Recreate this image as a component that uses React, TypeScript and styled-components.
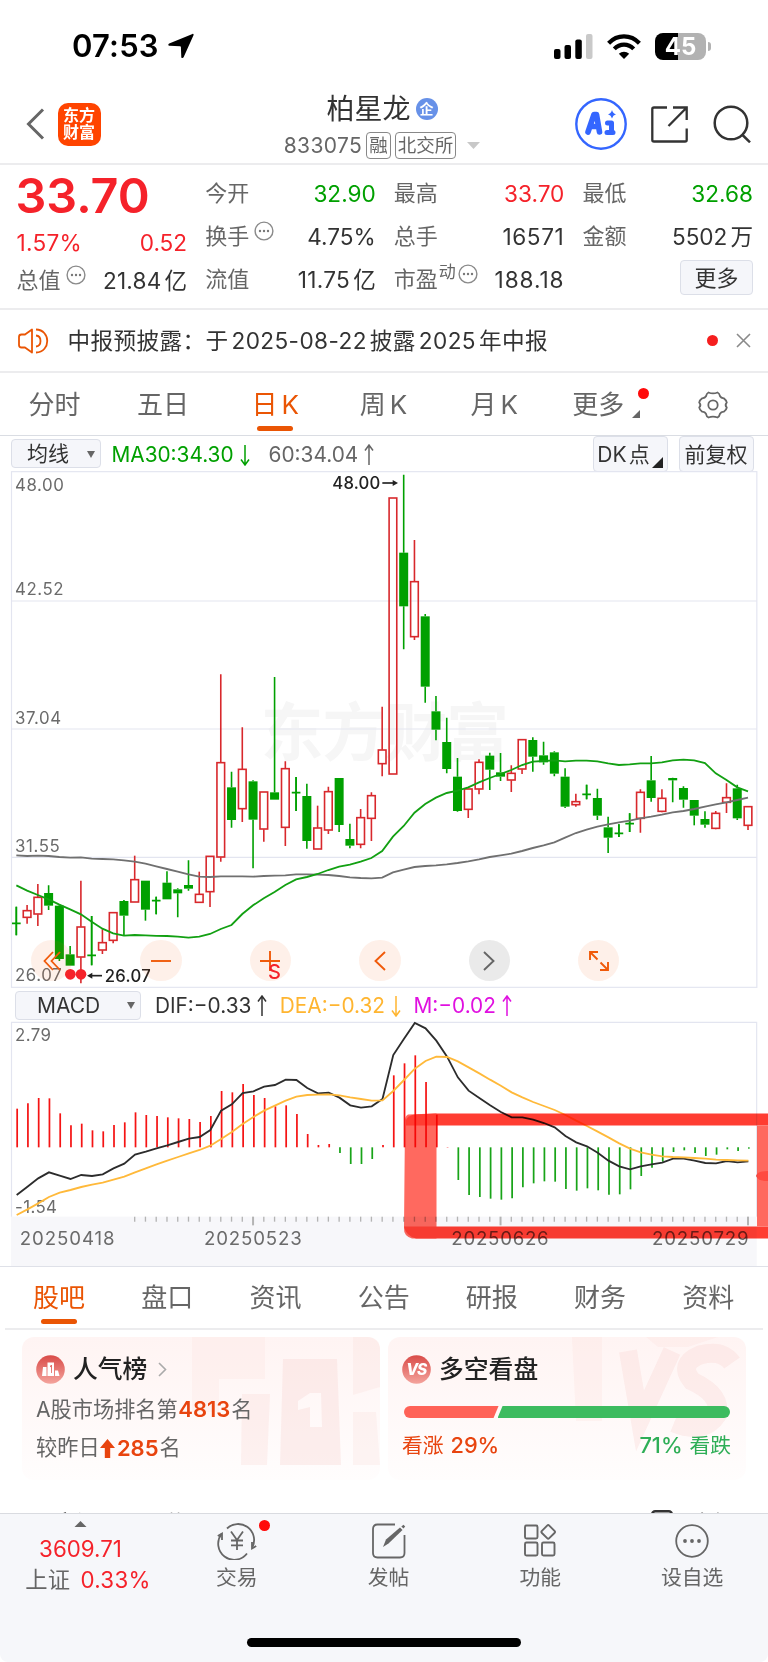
import React from "react";
import styled, { createGlobalStyle } from "styled-components";

const Global = createGlobalStyle`
  * { box-sizing: border-box; }
  body { margin: 0; background: #fff; }
  #root { font-family: Inter, "Noto Sans CJK SC", sans-serif; color: #333; line-height: 1.3; }
`;

const RED = "#f5222a";
const GREEN = "#00a000";
const ORANGE = "#ea5504";
const GREY = "#666";

const Page = styled.main`
  width: 768px;
  height: 1662px;
  display: flex;
  flex-direction: column;
  background: #fff;
  overflow: hidden;
`;

/* ---------- status bar ---------- */
const StatusBar = styled.div`
  height: 88px;
  flex: none;
  padding: 4px 56px 0 72px;
  display: flex;
  align-items: center;
  justify-content: space-between;
`;
const Clock = styled.div`
  display: flex;
  align-items: center;
  gap: 9px;
  font-size: 31px;
  font-weight: 600;
  letter-spacing: 0.2px;
  color: #000;
`;
const StatusIcons = styled.div`
  display: flex;
  align-items: center;
  gap: 14px;
`;
const Battery = styled.div`
  position: relative;
  width: 51px;
  height: 27px;
  border-radius: 8px;
  background: linear-gradient(90deg, #000 46%, #b2b2b2 46%);
  color: #fff;
  font-size: 24px;
  font-weight: 700;
  line-height: 27px;
  text-align: center;
  margin-right: 6px;
  &::after {
    content: "";
    position: absolute;
    right: -5px;
    top: 9px;
    width: 3px;
    height: 9px;
    border-radius: 0 4px 4px 0;
    background: #b2b2b2;
  }
`;

/* ---------- title bar ---------- */
const TitleBar = styled.header`
  height: 77px;
  flex: none;
  display: flex;
  align-items: center;
  padding: 0 17px 0 26px;
  border-bottom: 2px solid #ececee;
`;
const Side = styled.div<{ $end?: boolean }>`
  width: ${(p) => (p.$end ? 220 : 207)}px;
  height: 100%;
  display: flex;
  align-items: center;
  padding-bottom: 3px;
  justify-content: ${(p) => (p.$end ? "flex-end" : "flex-start")};
`;
const Logo = styled.div`
  width: 43px;
  height: 43px;
  margin-left: 12.5px;
  border-radius: 10px;
  background: #ff4400;
  color: #fff;
  font-size: 16px;
  font-weight: 700;
  line-height: 17.5px;
  padding-top: 4px;
  text-align: center;
`;
const TitleBlock = styled.div`
  flex: 1;
  height: 100%;
  display: flex;
  flex-direction: column;
  align-items: center;
`;
const TitleLine = styled.div`
  height: 42px;
  padding-top: 1px;
  display: flex;
  align-items: center;
  gap: 5px;
  font-size: 28px;
  color: #333;
`;
const CompanyBadge = styled.span`
  width: 22px;
  height: 22px;
  border-radius: 50%;
  background: #6791e8;
  color: #fff;
  font-size: 14px;
  font-weight: 700;
  line-height: 21px;
  text-align: center;
`;
const CodeLine = styled.div`
  height: 35px;
  display: flex;
  align-items: center;
  font-size: 21px;
  letter-spacing: 0.4px;
  color: ${GREY};
`;
const MarketTag = styled.span`
  height: 27px;
  padding: 0 2px;
  margin-left: 4px;
  border: 1.5px solid #888;
  border-radius: 4px;
  font-size: 18.5px;
  letter-spacing: 0;
  line-height: 25px;
`;

/* ---------- quote ---------- */
const Quote = styled.section`
  height: 145px;
  flex: none;
  padding: 7px 15px 0 16.5px;
  display: grid;
  grid-template-columns: repeat(4, 1fr);
  column-gap: 18px;
  border-bottom: 2px solid #ececee;
`;
const QuoteColumn = styled.div`
  display: flex;
  flex-direction: column;
`;
const QuoteCell = styled.div<{ $tone?: string; $height?: number }>`
  height: ${(p) => p.$height ?? 43}px;
  display: flex;
  align-items: center;
  justify-content: space-between;
  font-size: 22.6px;
  white-space: nowrap;
  color: ${(p) => p.$tone ?? "#333"};
`;
const Label = styled.span`
  display: flex;
  align-items: center;
  gap: 5px;
  font-size: 22px;
  color: ${GREY};
`;
const Value = styled.span<{ $spread?: number }>`
  letter-spacing: ${(p) => p.$spread ?? 0}px;
`;
const Unit = styled.span<{ $left?: number }>`
  margin-left: ${(p) => p.$left ?? 3}px;
  letter-spacing: 0;
`;
const Price = styled.div`
  height: 50px;
  margin: 0 0 3px -1px;
  font-size: 48.5px;
  line-height: 48px;
  font-weight: 600;
  letter-spacing: 0;
  color: ${RED};
`;
const Sup = styled.sup`
  font-size: 17px;
  line-height: 1;
  margin: -15px -3px 0 -4px;
`;
const MoreButton = styled.button`
  width: 73px;
  height: 35px;
  margin: 2px 0 0 auto;
  border: 1px solid #dcdfe8;
  border-radius: 4px;
  background: #f5f6fa;
  font: inherit;
  font-size: 22px;
  line-height: 32px;
  color: #333;
  padding: 0;
`;

/* ---------- notice ---------- */
const Notice = styled.div`
  height: 63px;
  flex: none;
  display: flex;
  align-items: center;
  padding: 0 17.5px;
  border-bottom: 2px solid #ececee;
  font-size: 22.6px;
`;
const NoticeText = styled.span`
  margin-left: 19px;
  flex: 1;
  white-space: pre;
  letter-spacing: 0.4px;
`;
const Num = styled.span`
  margin: 0 3px;
`;
const Dot = styled.span<{ $size: number }>`
  width: ${(p) => p.$size}px;
  height: ${(p) => p.$size}px;
  border-radius: 50%;
  background: #f51e1e;
`;
const CloseIcon = styled.svg`
  margin-left: 18px;
`;

/* ---------- tabs ---------- */
const PeriodTabs = styled.nav`
  height: 63px;
  flex: none;
  display: flex;
  border-bottom: 1px solid #dadde3;
`;
const Tab = styled.div<{ $active?: boolean; $width: number }>`
  position: relative;
  width: ${(p) => p.$width}px;
  height: 100%;
  display: flex;
  align-items: center;
  justify-content: center;
  gap: 8px;
  padding-top: 1.5px;
  font-size: 26px;
  white-space: nowrap;
  color: ${(p) => (p.$active ? ORANGE : GREY)};
  &::after {
    content: "";
    display: ${(p) => (p.$active ? "block" : "none")};
    position: absolute;
    left: 50%;
    margin-left: -18px;
    bottom: 4px;
    width: 36px;
    height: 5.5px;
    border-radius: 3px;
    background: ${ORANGE};
  }
`;
const Latin = styled.span`
  margin-left: -4px;
`;
const TabBadge = styled.span`
  position: absolute;
  right: 8px;
  top: 15px;
  width: 11px;
  height: 11px;
  border-radius: 50%;
  background: #ff0a0a;
`;
const Corner = styled.span<{ $size: number; $color: string }>`
  width: 0;
  height: 0;
  align-self: flex-end;
  margin: 0 0 3px 2px;
  border-left: ${(p) => p.$size}px solid transparent;
  border-bottom: ${(p) => p.$size}px solid ${(p) => p.$color};
`;

/* ---------- chart ---------- */
const Toolbar = styled.div<{ $height: number; $left: number }>`
  height: ${(p) => p.$height}px;
  flex: none;
  display: flex;
  align-items: center;
  padding: 0 14.5px 0 ${(p) => p.$left}px;
  font-size: 20.8px;
  white-space: nowrap;
`;
const Select = styled.div<{ $width: number; $pad: number }>`
  width: ${(p) => p.$width}px;
  height: 29px;
  border: 1px solid #dcdfe8;
  border-radius: 4px;
  background: #f5f6fa;
  display: flex;
  align-items: center;
  justify-content: space-between;
  padding: 1px 5px 0 ${(p) => p.$pad}px;
  font-size: 21px;
`;
const Reading = styled.span<{ $tone: string; $left: number }>`
  display: flex;
  align-items: center;
  gap: 6px;
  padding-top: 2px;
  margin-left: ${(p) => p.$left}px;
  color: ${(p) => p.$tone};
`;
const ToolButton = styled.div<{ $first?: boolean }>`
  width: 75px;
  height: 36px;
  margin-left: ${(p) => (p.$first ? "auto" : "11px")};
  border: 1px solid #dcdfe8;
  border-radius: 4px;
  background: #f5f6fa;
  display: flex;
  align-items: center;
  justify-content: center;
  padding-top: 2px;
  font-size: 21px;
`;
const ChartArea = styled.section`
  position: relative;
  flex: none;
  height: 796px;
  border-bottom: 1px solid #dfe1e8;
`;
const Drawing = styled.svg`
  display: block;
`;
const Controls = styled.div`
  position: absolute;
  left: 31px;
  top: 469px;
  display: flex;
  gap: 68px;
`;
const RoundButton = styled.div<{ $muted?: boolean }>`
  width: 41.4px;
  height: 41.4px;
  border-radius: 50%;
  display: flex;
  align-items: center;
  justify-content: center;
  color: ${(p) => (p.$muted ? "#666" : "#f05a0a")};
  background: ${(p) => (p.$muted ? "rgba(90,90,90,.13)" : "rgba(240,90,10,.09)")};
`;
const SellMark = styled.span`
  position: absolute;
  left: 268px;
  top: 489px;
  font-size: 20px;
  line-height: 24px;
  font-weight: 500;
  color: ${RED};
`;
const Marker = styled.svg`
  position: absolute;
  left: 400px;
  top: 638px;
  mix-blend-mode: multiply;
`;

/* ---------- community ---------- */
const SectionTabs = styled.nav`
  height: 63px;
  flex: none;
  margin: 0 5px;
  display: flex;
  border-bottom: 2px solid #ececee;
`;
const Cards = styled.section`
  flex: none;
  height: 151px;
  padding: 7px 22px 0;
  display: flex;
  gap: 8px;
`;
const Card = styled.article`
  position: relative;
  flex: 1;
  height: 143px;
  overflow: hidden;
  border-radius: 12px;
  background: linear-gradient(180deg, #fff4f3, #fffdfd);
  padding: 16px 15px 0 14px;
`;
const CardArt = styled.svg`
  position: absolute;
  left: 0;
  top: 0;
`;
const CardTitle = styled.h3`
  position: relative;
  margin: 0;
  height: 32px;
  display: flex;
  align-items: center;
  gap: 8px;
  font-size: 24.8px;
  font-weight: 500;
  color: #222;
`;
const Chevron = styled.svg`
  margin-left: 3px;
`;
const CardLine = styled.p<{ $top: number }>`
  position: relative;
  margin: ${(p) => p.$top}px 0 0;
  height: 30px;
  display: flex;
  align-items: center;
  font-size: 21.2px;
  color: ${GREY};
  b {
    color: #e8440f;
    font-size: 22px;
    font-weight: 600;
    margin: 0 1px 0 0.5px;
  }
`;
const Split = styled.div`
  position: relative;
  height: 12px;
  margin: 21px 1px 0 2px;
  display: flex;
  border-radius: 6px;
  overflow: hidden;
`;
const Up = styled.div`
  width: 29%;
  background: #ff6257;
  clip-path: polygon(0 0, 100% 0, calc(100% - 5px) 100%, 0 100%);
`;
const Down = styled.div`
  flex: 1;
  margin-left: -1px;
  background: #3dbb5f;
  clip-path: polygon(5px 0, 100% 0, 100% 100%, 0 100%);
`;
const Votes = styled.div`
  position: relative;
  display: flex;
  justify-content: space-between;
  margin-top: 12px;
  font-size: 20.8px;
  line-height: 30px;
`;
const Vote = styled.span<{ $tone: string }>`
  color: ${(p) => p.$tone};
  b {
    font-weight: 500;
    font-size: 21.8px;
    margin: 0 1px;
  }
`;
const FeedHead = styled.div`
  flex: none;
  height: 31.5px;
  padding: 26px 36px 0 33.5px;
  overflow: hidden;
  display: flex;
  align-items: flex-start;
`;
const FeedTab = styled.span<{ $strong?: boolean; $left?: number }>`
  font-weight: ${(p) => (p.$strong ? 500 : 400)};
  color: ${(p) => (p.$strong ? "#222" : "#888")};
  margin-top: ${(p) => (p.$strong ? 0 : -2)}px;
  margin-left: ${(p) => p.$left ?? 0}px;
  font-size: ${(p) => (p.$strong ? 25 : 20)}px;
  line-height: 36px;
`;
const LayoutIcon = styled.svg`
  margin: 3px 0 0 auto;
`;

/* ---------- bottom bar ---------- */
const BottomBar = styled.footer`
  flex: 1;
  position: relative;
  background: #f6f7fa;
  border-top: 1.5px solid #d9dbe0;
  border-radius: 0 0 8px 8px;
  display: flex;
  align-items: flex-start;
`;
const IndexQuote = styled.div`
  width: 161px;
  padding: 7px 0 0;
  display: flex;
  flex-direction: column;
  align-items: center;
  font-size: 22.3px;
  line-height: 31px;
  color: ${RED};
`;
const IndexPrice = styled.div`
  margin-top: 5.5px;
`;
const IndexChange = styled.div`
  display: flex;
  gap: 10px;
  margin-left: 15px;
  letter-spacing: 0.3px;
  span { color: ${GREY}; }
`;
const Action = styled.div`
  position: relative;
  width: 151.8px;
  padding-top: 8px;
  display: flex;
  flex-direction: column;
  align-items: center;
  font-size: 20.8px;
  line-height: 36px;
  color: ${GREY};
`;
const ActionBadge = styled.span`
  position: absolute;
  left: 98px;
  top: 6px;
  width: 11px;
  height: 11px;
  border-radius: 50%;
  background: #ff0a0a;
`;
const HomeIndicator = styled.div`
  position: absolute;
  left: 247px;
  top: 124px;
  width: 274px;
  height: 9px;
  border-radius: 5px;
  background: #000;
`;

/* ---------- data: plot units are thirds of a pixel ---------- */
type Candle = [up: 0 | 1, high: number, top: number, bottom: number, low: number];
const CANDLES: Candle[] = [
  [0, 530, 579, 581, 616], [1, 525, 541, 563, 581], [1, 462, 501, 553, 588], [0, 466, 489, 527, 540],
  [0, 522, 527, 687, 693], [0, 648, 673, 707, 707], [1, 452, 590, 682, 760], [0, 558, 675, 677, 706],
  [1, 598, 637, 661, 672], [1, 547, 547, 632, 640], [0, 510, 513, 557, 615], [1, 377, 448, 517, 517],
  [0, 452, 452, 539, 572], [0, 500, 511, 513, 553], [0, 424, 458, 508, 508], [0, 475, 478, 490, 562],
  [0, 391, 465, 476, 482], [1, 425, 492, 518, 518], [1, 378, 378, 486, 531], [1, -167, 97, 382, 395],
  [0, 125, 172, 270, 293], [1, -8, 117, 237, 276], [0, 151, 154, 269, 415], [1, 185, 185, 298, 335],
  [0, -159, 187, 209, 209], [1, 94, 115, 293, 348], [0, 141, 187, 189, 243], [0, 161, 198, 333, 356],
  [1, 227, 293, 358, 358], [1, 170, 184, 301, 312], [0, 144, 144, 285, 306], [0, 281, 327, 347, 355],
  [1, 237, 262, 344, 355], [1, 187, 196, 266, 333], [1, -70, 59, 102, 139], [1, -697, -697, 133, 133],
  [0, -766, -532, -371, -242], [1, -570, -446, -279, -270], [0, -348, -341, -130, -82], [0, -102, -56, -1, 31],
  [0, -37, 36, 117, 130], [0, 84, 140, 243, 245], [1, 176, 176, 239, 264], [1, 88, 96, 178, 193],
  [0, 68, 77, 119, 180], [0, 69, 127, 140, 153], [1, 106, 129, 151, 186], [1, 28, 28, 118, 132],
  [0, 22, 30, 80, 125], [0, 35, 76, 97, 104], [0, 64, 67, 131, 139], [0, 115, 140, 230, 234],
  [1, 191, 214, 225, 230], [0, 164, 192, 194, 208], [0, 176, 204, 257, 270], [0, 260, 292, 323, 369],
  [0, 283, 309, 312, 321], [0, 250, 280, 283, 306], [1, 178, 186, 266, 308], [0, 78, 151, 204, 215],
  [1, 178, 204, 245, 247], [0, 143, 144, 151, 217], [0, 169, 174, 209, 233], [0, 210, 210, 257, 286],
  [0, 244, 267, 284, 293], [1, 243, 249, 296, 298], [1, 160, 202, 218, 249], [0, 164, 175, 265, 270],
  [1, 229, 229, 287, 300],
];
const MA30 = [
  466, 482, 495, 508, 524, 538, 553, 575, 596, 610, 617, 615, 616, 617.5, 618, 620, 623, 620, 612, 597, 585, 552, 526,
  505, 486, 465, 448, 441, 432, 420, 410, 404, 395, 384, 363, 320, 288, 248, 222, 203, 189, 182, 172, 157, 144, 132,
  120, 105, 95, 93, 91, 94, 92, 92, 94, 100, 105, 103, 100, 100, 97, 91, 89, 91, 99, 130, 150, 172, 184,
];
const MA60 = [
  376, 378, 377, 378, 381, 383, 382, 386, 387, 388, 391, 395, 401, 409, 417, 425, 433, 440, 441, 439, 439, 439, 440,
  438, 437, 436, 433, 433, 434, 435, 438, 442, 444, 445, 443, 427, 419, 411, 408, 406, 403, 399, 394, 388, 381, 376,
  371, 363, 354, 346, 337, 323, 309, 299, 290, 283, 277, 272, 265, 260, 254, 247, 243, 237, 230, 223, 217, 210, 203,
];
const MACD_BARS = [
  386, 370, 354, 355, 400, 436, 431, 451, 454, 435, 427, 397, 405, 408, 412, 415, 417, 426, 408, 333, 337, 312, 345,
  354, 379, 376, 402, 462, 495, 492, 519, 552, 552, 537, 495, 286, 250, 226, 306, 404, 501, 600, 645, 651, 656, 659,
  655, 622, 610, 604, 605, 627, 632, 625, 631, 644, 643, 628, 588, 563, 545, 516, 511, 519, 528, 524, 508, 513, 506,
];
const DIF = [
  645, 620, 595, 577, 587, 597, 585, 588, 583, 565, 551, 524, 515, 505, 496, 486, 476, 471, 450, 392, 373, 339, 334,
  320, 315, 299, 300, 324, 340, 338, 353, 376, 383, 379, 357, 225, 176, 129, 145, 182, 230, 292, 332, 354, 376, 396,
  412, 412, 419, 429, 442, 468, 487, 499, 518, 542, 559, 568, 559, 553, 548, 536, 536, 542, 549, 550, 543, 547, 544,
];
const DEA = [
  705, 688, 670, 651, 638, 630, 621, 614, 608, 599, 590, 577, 565, 553, 542, 531, 520, 510, 497, 477, 456, 432, 411,
  392, 377, 362, 350, 345, 344, 343, 346, 352, 357, 362, 361, 333, 300, 266, 243, 230, 231, 244, 262, 280, 299, 317,
  337, 352, 366, 378, 390, 405, 422, 438, 455, 472, 490, 506, 517, 524, 529, 531, 532, 534, 536, 539, 540, 541, 542,
];
const STEP = 32.28;
const at = (i: number) => 49 + STEP * i;
const line = (values: number[], shift = 0) =>
  values.map((v, i) => `${(at(i) + shift).toFixed(1)},${v}`).join(" ");

function PriceChart() {
  return (
    <Drawing width="768" height="518" viewBox="0 -777 2304 1554">
      <text x="782" y="74" fontSize="188" fontWeight="700" fill="#f6f6f6" textLength="745">东方财富</text>
      <g stroke="#e3e5f0" strokeWidth="3.5" fill="none">
        <rect x="34.5" y="-775" width="2236" height="1547" />
        <path d="M34-387H2270M34-3H2270M34 382H2270" />
      </g>
      {CANDLES.map(([up, high, top, bottom, low], i) => {
        const x = at(i);
        const color = up ? "#d8282c" : GREEN;
        const thin = bottom - top < 4;
        return (
          <g key={i} stroke={color} strokeWidth="4.8">
            <path d={`M${x} ${high}V${top}M${x} ${bottom}V${low}`} />
            {thin ? (
              <path d={`M${x - 13} ${top + 1}h26M${x} ${high}V${low}`} />
            ) : up ? (
              <rect x={x - 11.5} y={top + 1} width="23" height={bottom - top - 2} fill="none" />
            ) : (
              <rect x={x - 13.5} y={top} width="27" height={bottom - top} fill={color} stroke="none" />
            )}
          </g>
        );
      })}
      <polyline points={line(MA60)} fill="none" stroke="#707070" strokeWidth="5.5" />
      <polyline points={line(MA30)} fill="none" stroke="#12a012" strokeWidth="5.5" />
      <g fontSize="50.5" fill="#6b6b6b" letterSpacing="1.8">
        <text x="45" y="-716">48.00</text>
        <text x="45" y="-406">42.52</text>
        <text x="45" y="-19">37.04</text>
        <text x="45" y="366">31.55</text>
        <text x="45" y="752">26.07</text>
      </g>
      <g fontSize="50" fontWeight="500" fill="#222">
        <text x="997" y="-722" textLength="144">48.00</text>
        <text x="314" y="755" textLength="138">26.07</text>
      </g>
      <g stroke="#222" strokeWidth="5" fill="#222">
        <path d="M1147-741H1182" />
        <path d="M1178-750L1194-741L1178-732Z" stroke="none" />
        <path d="M272 737H306" />
        <path d="M277 728L261 737L277 746Z" stroke="none" />
      </g>
      <circle cx="211" cy="733" r="16" fill={RED} />
      <circle cx="243" cy="733" r="16" fill={RED} />
    </Drawing>
  );
}

function MacdChart() {
  return (
    <Drawing width="768" height="245" viewBox="0 123 2304 735">
      <rect x="33" y="710" width="2237" height="148" fill="#f7f7fa" />
      <path d="M34.5 710V127H2270V710" fill="none" stroke="#e3e5f0" strokeWidth="3.5" />
      {MACD_BARS.map((v, i) => (
        <path key={i} d={`M${at(i) + 2.5} 502V${v}`} stroke={v < 502 ? "#f51414" : "#18a418"} strokeWidth="5.2" />
      ))}
      <g fontSize="50.5" fill="#6b6b6b" letterSpacing="1.2">
        <text x="45" y="182">2.79</text>
        <text x="45" y="699">-1.54</text>
      </g>
      <polyline points={line(DIF, 1)} fill="none" stroke="#2c2c2c" strokeWidth="5.5" />
      <polyline points={line(DEA, 1)} fill="none" stroke="#ffb93a" strokeWidth="5.5" />
      {DIF.map((_, i) => {
        if (i < 11) return null;
        const major = i === 22 || i === 45 || i === 68;
        return (
          <path key={i} d={`M${at(i)} 710v${major ? 26 : 15}`} stroke="#b4b4b4" strokeWidth={major ? 6 : 4} />
        );
      })}
      <g fontSize="56" fill="#6b6b6b">
        <text x="59" y="795" textLength="285">20250418</text>
        <text x="612" y="795" textLength="293">20250523</text>
        <text x="1354" y="795" textLength="292">20250626</text>
        <text x="1956" y="795" textLength="290">20250729</text>
      </g>
    </Drawing>
  );
}

const RaisedIcon = styled.span`
  display: flex;
  margin-top: -11px;
`;
const Info = () => (
  <RaisedIcon>
    <svg width="20" height="20" viewBox="0 0 20 20">
      <circle cx="10" cy="10" r="8.9" fill="none" stroke="#8a8a8a" strokeWidth="1.4" />
      <g fill="#777">
        <circle cx="6" cy="10" r="1.2" /><circle cx="10" cy="10" r="1.2" /><circle cx="14" cy="10" r="1.2" />
      </g>
    </svg>
  </RaisedIcon>
);

const Arrow = ({ down }: { down?: boolean }) => (
  <svg width="10" height="22" viewBox="0 0 10 22" fill="none" stroke="currentColor" strokeWidth="1.5">
    <path d={down ? "M5 1V21M1 15.5L5 21L9 15.5" : "M5 21V1M1 6.5L5 1L9 6.5"} />
  </svg>
);
const Caret = ({ up, width = 8, height = 7 }: { up?: boolean; width?: number; height?: number }) => (
  <svg width={width} height={height} viewBox="0 0 10 8" preserveAspectRatio="none">
    <path d={up ? "M0 8L5 0L10 8Z" : "M0 0H10L5 8Z"} fill="#666" />
  </svg>
);
const CodeCaret = styled.svg`
  margin-left: 11px;
`;
const ShareIcon = styled.svg`
  margin-left: 24px;
`;
const SearchIcon = styled.svg`
  margin-left: 25px;
`;

const PERIODS: [string, number][] = [["分时", 109.2], ["五日", 108], ["日K", 117], ["周K", 99.6], ["月K", 122.2]];
const SECTIONS = ["股吧", "盘口", "资讯", "公告", "研报", "财务", "资料"];

export default function App() {
  return (
    <Page>
      <Global />
      <StatusBar>
        <Clock>
          07:53
          <svg width="26" height="26" viewBox="0 0 26 25">
            <path d="M24.5 .4C25.3 .1 25.9 .8 25.5 1.7L15.6 23.8C15 25 13.4 24.8 13.3 23.4L12.9 13.5Q12.8 12.7 12 12.7L1.6 12.2C.1 12.1-.1 10.6 1.2 10Z" />
          </svg>
        </Clock>
        <StatusIcons>
          <svg width="39" height="25" viewBox="0 0 39 25">
            <rect x="0" y="15" width="6.5" height="10" rx="2" />
            <rect x="10.5" y="11" width="6.5" height="14" rx="2" />
            <rect x="21.3" y="5.5" width="6.5" height="19.5" rx="2" />
            <rect x="32" y="0" width="6.5" height="25" rx="2" fill="#c9c9c9" />
          </svg>
          <svg width="34" height="25" viewBox="0 0 34 25" fill="none" stroke="#000" strokeWidth="4.2">
            <path d="M1.6 9.2C10.3 .1 23.7 .1 32.4 9.2" />
            <path d="M7.3 14.9C12.8 9.3 21.2 9.3 26.7 14.9" />
            <path d="M17 25L11.8 19.7C14.8 17 19.2 17 22.2 19.7Z" fill="#000" stroke="none" />
          </svg>
          <Battery>45</Battery>
        </StatusIcons>
      </StatusBar>

      <TitleBar>
        <Side>
          <svg width="19" height="32" viewBox="0 0 19 32" fill="none" stroke="#666" strokeWidth="3">
            <path d="M17 1.5L2.5 16L17 30.5" />
          </svg>
          <Logo>东方<br />财富</Logo>
        </Side>
        <TitleBlock>
          <TitleLine>柏星龙<CompanyBadge>企</CompanyBadge></TitleLine>
          <CodeLine>
            833075
            <MarketTag>融</MarketTag>
            <MarketTag>北交所</MarketTag>
            <CodeCaret width="13" height="7" viewBox="0 0 13 7"><path d="M0 0H13L6.5 7Z" fill="#c8c8c8" /></CodeCaret>
          </CodeLine>
        </TitleBlock>
        <Side $end>
          <svg width="52" height="52" viewBox="0 0 52 52">
            <circle cx="26" cy="26" r="24.7" fill="none" stroke="#3466ff" strokeWidth="2.4" />
            <g fill="none" stroke="#3466ff" strokeWidth="5.6" strokeLinecap="round" strokeLinejoin="round">
              <path d="M13 34L19 16.500H21.500L24.500 34M17.500 28.500H23" />
              <path d="M32.500 25H36.500V34.500M32 34.500H38" strokeWidth="5" />
            </g>
            <path d="M37 12Q37.8 15.5 41 16.3Q37.8 17.2 37 20.6Q36.2 17.2 33 16.3Q36.2 15.5 37 12Z" fill="#3466ff" />
          </svg>
          <ShareIcon width="37" height="37" viewBox="0 0 37 37" fill="none" stroke="#333" strokeWidth="2.3">
            <path d="M16 1.5H3Q1.300 1.500 1.300 3V34Q1.300 35.500 3 35.500H34Q35.700 35.500 35.700 34V22.5M22 1.5H35.7V14M35.5 1.7L17.5 20" />
          </ShareIcon>
          <SearchIcon width="38" height="38" viewBox="0 0 38 38" fill="none" stroke="#333" strokeWidth="2.5">
            <circle cx="18" cy="18" r="16.3" />
            <path d="M29 29.5L37 37.3" />
          </SearchIcon>
        </Side>
      </TitleBar>

      <Quote>
        <QuoteColumn>
          <Price>33.70</Price>
          <QuoteCell $tone={RED} $height={35}><Value $spread={0.3}>1.57%</Value><Value>0.52</Value></QuoteCell>
          <QuoteCell $height={41}><Label>总值<Info /></Label><Value $spread={0.2}>21.84<Unit>亿</Unit></Value></QuoteCell>
        </QuoteColumn>
        <QuoteColumn>
          <QuoteCell $tone={GREEN}><Label>今开</Label><Value>32.90</Value></QuoteCell>
          <QuoteCell><Label>换手<Info /></Label><Value>4.75%</Value></QuoteCell>
          <QuoteCell><Label>流值</Label><Value $spread={0.3}>11.75<Unit>亿</Unit></Value></QuoteCell>
        </QuoteColumn>
        <QuoteColumn>
          <QuoteCell $tone={RED}><Label>最高</Label><Value>33.70</Value></QuoteCell>
          <QuoteCell><Label>总手</Label><Value $spread={0.6}>16571</Value></QuoteCell>
          <QuoteCell><Label>市盈<Sup>动</Sup><Info /></Label><Value $spread={0.9}>188.18</Value></QuoteCell>
        </QuoteColumn>
        <QuoteColumn>
          <QuoteCell $tone={GREEN}><Label>最低</Label><Value>32.68</Value></QuoteCell>
          <QuoteCell><Label>金额</Label><Value>5502<Unit>万</Unit></Value></QuoteCell>
          <MoreButton>更多</MoreButton>
        </QuoteColumn>
      </Quote>

      <Notice>
        <svg width="31" height="26" viewBox="0 0 31 26" fill="none" stroke={ORANGE} strokeWidth="1.8">
          <path d="M14 1.5V24.5L7 19.5H3.5Q1 19.5 1 17V9Q1 6.5 3.5 6.5H7Z" strokeLinejoin="round" />
          <path d="M18 7.5C24 8 24 18 18 18.5M18 1.5C33 2 33 24 18 24.5" />
        </svg>
        <NoticeText>中报预披露：于<Num>2025-08-22</Num>披露<Num>2025</Num>年中报</NoticeText>
        <Dot $size={11} />
        <CloseIcon width="15" height="15" viewBox="0 0 15 15" stroke="#8a8a8a" strokeWidth="1.6">
          <path d="M1 1L14 14M14 1L1 14" />
        </CloseIcon>
      </Notice>

      <PeriodTabs>
        {PERIODS.map(([name, width], i) => (
          <Tab key={name} $width={width} $active={i === 2}>
            {name.endsWith("K") ? <><span>{name[0]}</span><Latin>K</Latin></> : name}
          </Tab>
        ))}
        <Tab $width={102}>
          更多
          <svg width="8" height="26" viewBox="0 0 8 26"><path d="M8 18V26H0Z" fill="#666" /></svg>
          <TabBadge />
        </Tab>
        <Tab $width={111}>
          <svg width="30" height="28" viewBox="0 0 30 28" fill="none" stroke="#666" strokeWidth="1.8" strokeLinejoin="round">
            <path d="M10.5 1.5Q15 3.4 19.5 1.5Q21.5 2.4 22 5.2Q23 7 25.8 7.3Q28.6 9.6 28.8 11.5Q26.4 14 28.8 16.5Q28.4 19 25.8 20.7Q23 21 22 22.8Q21.4 25.6 19.5 26.5Q15 24.6 10.5 26.5Q8.5 25.6 8 22.8Q7 21 4.2 20.7Q1.5 18.8 1.2 16.5Q3.6 14 1.2 11.5Q1.5 9.2 4.2 7.3Q7 7 8 5.2Q8.6 2.4 10.5 1.5Z" />
            <circle cx="15" cy="14" r="4.7" />
          </svg>
        </Tab>
      </PeriodTabs>

      <Toolbar $height={35} $left={11}>
        <Select $width={90} $pad={15}>均线<Caret /></Select>
        <Reading $tone={GREEN} $left={10.5}>MA30:34.30<Arrow down /></Reading>
        <Reading $tone={GREY} $left={19}>60:34.04<Arrow /></Reading>
        <ToolButton $first>DK<Unit $left={2}>点</Unit><Corner $size={11} $color="#222" /></ToolButton>
        <ToolButton>前复权</ToolButton>
      </Toolbar>
      <ChartArea>
        <PriceChart />
        <Toolbar $height={32} $left={15}>
          <Select $width={126} $pad={21}>MACD<Caret /></Select>
          <Reading $tone="#333" $left={14}>DIF:−0.33<Arrow /></Reading>
          <Reading $tone="#ffb530" $left={12.5}>DEA:−0.32<Arrow down /></Reading>
          <Reading $tone="#e010e0" $left={12.5}>M:−0.02<Arrow /></Reading>
        </Toolbar>
        <MacdChart />
        <Controls>
          <RoundButton>
            <svg width="18" height="20" viewBox="0 0 18 20" fill="none" stroke="currentColor" strokeWidth="1.8"><path d="M10 1L1.5 10L10 19M17 1L8.5 10L17 19" /></svg>
          </RoundButton>
          <RoundButton>
            <svg width="20" height="20" viewBox="0 0 20 20" stroke="currentColor" strokeWidth="1.9"><path d="M0 10H20" /></svg>
          </RoundButton>
          <RoundButton>
            <svg width="20" height="20" viewBox="0 0 20 20" stroke="currentColor" strokeWidth="1.9"><path d="M0 10H20M10 0V20" /></svg>
          </RoundButton>
          <RoundButton>
            <svg width="12" height="20" viewBox="0 0 12 20" fill="none" stroke="currentColor" strokeWidth="1.9"><path d="M11 1L1.5 10L11 19" /></svg>
          </RoundButton>
          <RoundButton $muted>
            <svg width="12" height="20" viewBox="0 0 12 20" fill="none" stroke="currentColor" strokeWidth="1.9"><path d="M1 1L10.5 10L1 19" /></svg>
          </RoundButton>
          <RoundButton>
            <svg width="20" height="20" viewBox="0 0 20 20" fill="none" stroke="currentColor" strokeWidth="1.9"><path d="M1 9V1H9M1 1L8.5 8.5M19 11V19H11M19 19L11.5 11.5" /></svg>
          </RoundButton>
        </Controls>
        <SellMark>S</SellMark>
        <Marker width="368" height="136" viewBox="0 0 368 136">
          <path d="M8 5.5L34 4.5H36.5V129.5H12Q3.5 127 4 119L5 11Q5 7 8 5.5Z" fill="#ff695f" />
          <path d="M6 11Q8 6 16 5.5L36 4.5H368V16.5H6Z" fill="#ff3d32" />
          <path d="M4 117.5H368V129.5H16Q6 127 4 117.5Z" fill="#ff3d32" />
          <path d="M357 16.5H368V117.5H357Z" fill="#ff695f" />
          <path d="M356 67Q357 62 368 62V72Q358 72 356 67Z" fill="#ff4a40" />
        </Marker>
      </ChartArea>

      <SectionTabs>
        {SECTIONS.map((name, i) => (
          <Tab key={name} $width={108.2} $active={i === 0}>{name}</Tab>
        ))}
      </SectionTabs>
      <Cards>
        <Card>
          <CardArt width="358" height="143" viewBox="0 0 358 143" fill="#f8d5d2">
            <path d="M170 0H243V42H197V75H170Z" opacity=".17" />
            <path d="M220 57H248L245 128H219Z" opacity=".28" />
            <path fillRule="evenodd" d="M261 22H315L319 128H258ZM276 64L288 56H299L300 90H288V70L276 73Z" opacity=".36" />
            <path d="M331 75H354L358 128H331ZM331 0H358V50L331 58Z" opacity=".22" />
          </CardArt>
          <CardTitle>
            <svg width="29" height="29" viewBox="0 0 29 29">
              <defs><linearGradient id="rank" x2="0" y2="1"><stop stopColor="#d94b48" /><stop offset="1" stopColor="#f4a49d" /></linearGradient></defs>
              <circle cx="14.5" cy="14.5" r="14.3" fill="url(#rank)" />
              <path fillRule="evenodd" fill="#fff" d="M7 12H10.5V21H6ZM11.5 7.5H18V21H11.5ZM14 11V12.2L15 11.8V18H16V10H15ZM19 15.5H22L23.5 21H19Z" />
            </svg>
            人气榜
            <Chevron width="9" height="15" viewBox="0 0 9 15" fill="none" stroke="#aaa" strokeWidth="1.6"><path d="M1 1L7.5 7.5L1 14" /></Chevron>
          </CardTitle>
          <CardLine $top={9.5}>A股市场排名第<b>4813</b>名</CardLine>
          <CardLine $top={8.5}>
            较昨日
            <svg width="15" height="19" viewBox="0 0 15 19"><path d="M7.5 0L15 9H10.2V19H4.8V9H0Z" fill="#e8440f" /></svg>
            <b>&#8202;285</b>名
          </CardLine>
        </Card>
        <Card>
          <CardArt width="358" height="143" viewBox="0 0 358 143">
            <g fill="none" stroke="#f8d5d2" opacity=".34">
              <path d="M240 14L252 84L284 14" strokeWidth="18" />
              <path d="M344 26Q334 12 312 18Q290 27 304 44Q334 58 329 78Q316 98 286 86" strokeWidth="19" />
            </g>
            <path d="M184 0H214V84H188ZM258 0H330L300 10H270Z" fill="#f8d5d2" opacity=".2" />
          </CardArt>
          <CardTitle>
            <svg width="29" height="29" viewBox="0 0 29 29">
              <circle cx="14.5" cy="14.5" r="14.3" fill="url(#rank)" />
              <text x="14.2" y="20" fontSize="15.5" fontWeight="800" fontStyle="italic" fill="#fff" textAnchor="middle" letterSpacing="-1.2">VS</text>
            </svg>
            多空看盘
          </CardTitle>
          <Split><Up /><Down /></Split>
          <Votes>
            <Vote $tone="#e8440f">看涨 <b>29%</b></Vote>
            <Vote $tone="#2fae57"><b>71%</b> 看跌</Vote>
          </Votes>
        </Card>
      </Cards>
      <FeedHead>
        <FeedTab $strong>最新</FeedTab>
        <FeedTab $left={63}>最热</FeedTab>
        <LayoutIcon width="22" height="22" viewBox="0 0 22 22"><rect x="1.2" y="1.2" width="19.6" height="19.6" rx="3" fill="none" stroke="#333" strokeWidth="2.4" /></LayoutIcon>
        <FeedTab $left={19}>全部</FeedTab>
      </FeedHead>

      <BottomBar>
        <IndexQuote>
          <Caret up width={13} height={6.5} />
          <IndexPrice>3609.71</IndexPrice>
          <IndexChange><span>上证</span>0.33%</IndexChange>
        </IndexQuote>
        <Action>
          <svg width="40" height="38" viewBox="0 0 40 38" fill="none" stroke="#666" strokeWidth="1.8">
            <path d="M10 6.5A16 16 0 0 1 35.5 25M30 31.5A16 16 0 0 1 4.5 12" />
            <path d="M.8 14L5 11.5V18M39.2 24L35 26.5V20" />
            <path d="M14 9.5L20 18L26 9.5M20 18V28M14 18.5H26M14 23.3H26" />
          </svg>
          交易
          <ActionBadge />
        </Action>
        <Action>
          <svg width="36" height="38" viewBox="0 0 36 38" fill="none" stroke="#666" strokeWidth="1.8">
            <path d="M24 2.5H6.5Q2 2.5 2 7V31Q2 35.5 6.5 35.5H29Q33.5 35.5 33.5 31V13" />
            <path d="M12 25L15 17.5L29 5.5L31.5 8L17.5 21.5Z" fill="#666" stroke="none" />
            <path d="M30.3 4.5L32.5 2.7L34.2 4.5L32.5 6.5Z" fill="#666" stroke="none" />
          </svg>
          发帖
        </Action>
        <Action>
          <svg width="34" height="38" viewBox="0 0 34 38" fill="none" stroke="#666" strokeWidth="1.9">
            <rect x="2" y="3.5" width="12.5" height="13" rx="1.5" />
            <rect x="2" y="20.5" width="12.5" height="13" rx="1.5" />
            <rect x="19" y="20.5" width="12.5" height="13" rx="1.5" />
            <rect x="20" y="4.7" width="10.4" height="10.4" rx="1.5" transform="rotate(45 25.2 9.9)" />
          </svg>
          功能
        </Action>
        <Action>
          <svg width="36" height="38" viewBox="0 0 36 38" fill="#666">
            <circle cx="18" cy="19" r="15.8" fill="none" stroke="#666" strokeWidth="1.8" />
            <circle cx="11" cy="19" r="1.9" /><circle cx="18" cy="19" r="1.9" /><circle cx="25" cy="19" r="1.9" />
          </svg>
          设自选
        </Action>
        <HomeIndicator />
      </BottomBar>
    </Page>
  );
}
